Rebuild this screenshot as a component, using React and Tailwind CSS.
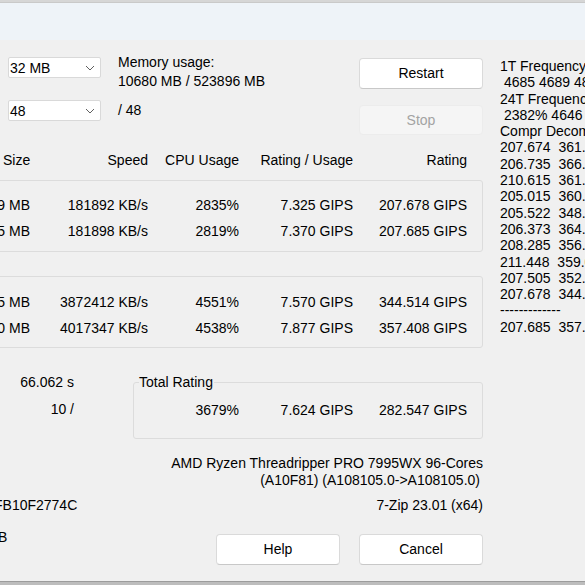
import React from 'react';

const cols = 'grid grid-cols-[50px_118px_91px_114px_114px] text-right whitespace-nowrap';

const rightLines = [
  '1T Frequency (MHz):',
  ' 4685 4689 4800 4800 4800',
  '24T Frequency (%, MHz):',
  ' 2382% 4646  2389% 4650',
  'Compr Decompr',
  '207.674  361.102',
  '206.735  366.041',
  '210.615  361.224',
  '205.015  360.517',
  '205.522  348.907',
  '206.373  364.338',
  '208.285  356.620',
  '211.448  359.071',
  '207.505  352.818',
  '207.678  344.514',
  '-------------',
  '207.685  357.408',
];

function Combo({ value }) {
  return (
    <div className="h-[21px] w-[93px] bg-white border border-[#d9d9d9] rounded-[2px] flex items-center justify-between pl-[1px] pr-[5px]">
      <span className="leading-none">{value}</span>
      <svg width="10" height="6" viewBox="0 0 10 6" className="text-[#606060]">
        <polyline points="1,1 5,5 9,1" fill="none" stroke="currentColor" strokeWidth="1" />
      </svg>
    </div>
  );
}

function Button({ children, disabled }) {
  return (
    <div
      className={
        disabled
          ? 'w-[124px] h-[30px] flex items-center justify-center rounded-[4px] bg-[#f5f5f5] border border-[#ececec] text-[#a3a3a3]'
          : 'w-[124px] h-[31px] flex items-center justify-center rounded-[4px] bg-white border border-[#dadada] border-b-[#c8c8c8] text-black'
      }
    >
      {children}
    </div>
  );
}

function ResultRow({ size, speed, cpu, ru, rating }) {
  return (
    <div className={cols + ' h-[26px] items-center'}>
      <span>{size}</span>
      <span>{speed}</span>
      <span>{cpu}</span>
      <span>{ru}</span>
      <span>{rating}</span>
    </div>
  );
}

export default function App() {
  return (
    <div className="w-[585px] h-[585px] overflow-hidden flex flex-col bg-[#f0f0f0] text-black text-[14px] font-['Liberation_Sans',Arial,sans-serif]">
      {/* title strip */}
      <div className="h-[3px] bg-[#d6d6d6] border-b border-[#c9c9c9]" />
      <div className="h-[37px] bg-[#eef3f8]" />

      <div className="h-[541px] flex">
        {/* main dialog area */}
        <div className="w-[483px] shrink-0 flex flex-col">
          {/* settings row */}
          <div className="h-[100px] flex">
            <div className="ml-[8px] pt-[17px] flex flex-col gap-[22px]">
              <Combo value="32 MB" />
              <Combo value="48" />
            </div>
            <div className="ml-[17px] pt-[13px] leading-[19px]">
              <div>Memory usage:</div>
              <div>10680 MB / 523896 MB</div>
              <div className="mt-[10px]">/ 48</div>
            </div>
            <div className="ml-auto pt-[18px] flex flex-col gap-[16px]">
              <Button>Restart</Button>
              <Button disabled>Stop</Button>
            </div>
          </div>

          {/* header */}
          <div className={cols + ' -ml-[20px] h-[40px] items-center'}>
            <span className="text-left pl-[23px]">Size</span>
            <span>Speed</span>
            <span>CPU Usage</span>
            <span>Rating / Usage</span>
            <span>Rating</span>
          </div>

          {/* compressing */}
          <div className="-ml-[21px] h-[72px] border border-[#dcdcdc] rounded-[3px] pt-[11px]">
            <ResultRow size="9 MB" speed="181892 KB/s" cpu="2835%" ru="7.325 GIPS" rating="207.678 GIPS" />
            <ResultRow size="5 MB" speed="181898 KB/s" cpu="2819%" ru="7.370 GIPS" rating="207.685 GIPS" />
          </div>

          {/* decompressing */}
          <div className="-ml-[21px] mt-[24px] h-[72px] border border-[#dcdcdc] rounded-[3px] pt-[12px]">
            <ResultRow size="5 MB" speed="3872412 KB/s" cpu="4551%" ru="7.570 GIPS" rating="344.514 GIPS" />
            <ResultRow size="0 MB" speed="4017347 KB/s" cpu="4538%" ru="7.877 GIPS" rating="357.408 GIPS" />
          </div>

          {/* totals */}
          <div className="h-[97px] flex">
            <div className="w-[74px] text-right pt-[21px] leading-[27px]">
              <div>66.062 s</div>
              <div>10 /</div>
            </div>
            <div className="relative ml-[59px] mt-[34px] w-[350px] h-[57px] border border-[#dcdcdc] rounded-[3px]">
              <span className="absolute left-[5px] -top-[9px] leading-[17px] bg-[#f0f0f0] pr-[1px]">Total Rating</span>
              <div className="grid grid-cols-[105px_114px_114px] text-right pt-[19px] leading-[17px]">
                <span>3679%</span>
                <span>7.624 GIPS</span>
                <span>282.547 GIPS</span>
              </div>
            </div>
          </div>

          {/* cpu info */}
          <div className="mt-[10px] text-right leading-[17px]">
            <div>AMD Ryzen Threadripper PRO 7995WX 96-Cores</div>
            <div className="pr-[3px]">(A10F81) (A108105.0-&gt;A108105.0)</div>
          </div>

          <div className="mt-[8px] flex justify-between leading-[17px]">
            <span className="-ml-[6px]">FB10F2774C</span>
            <span>7-Zip 23.01 (x64)</span>
          </div>

          <div className="mt-[15px] flex">
            <span className="leading-[17px] -ml-[2px]">B</span>
            <div className="ml-auto mt-[5px] flex gap-[19px]">
              <Button>Help</Button>
              <Button>Cancel</Button>
            </div>
          </div>
        </div>

        {/* per-pass log */}
        <div className="ml-[17px] pt-[18px] leading-[16.3px] whitespace-pre overflow-hidden">
          {rightLines.map((l, i) => (
            <div key={i}>{l}</div>
          ))}
        </div>
      </div>

      <div className="flex-1 border-t border-[#9c9c9c] bg-[#bdbdbd]" />
    </div>
  );
}
